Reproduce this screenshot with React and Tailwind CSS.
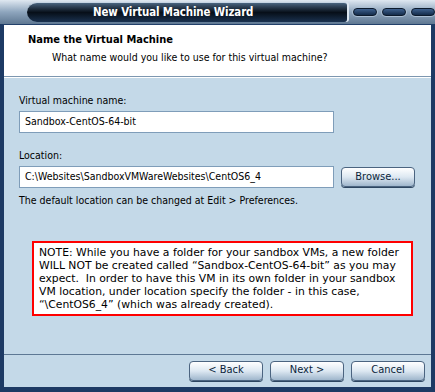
export default function App() {
  const ui = { fontFamily: '"DejaVu Sans Condensed", "DejaVu Sans", sans-serif' };
  const Pill = () => (
    <div className="w-[24px] h-[8px] rounded-full bg-gradient-to-b from-[#3f6290] to-[#142c4a] border border-[#0c1a2c] shadow-[0_0_0_1px_#a9bdd2]" />
  );
  const Btn = ({ children, w = "w-[74px]" }) => (
    <div className={`${w} h-[20px] rounded-[4px] border border-[#4b6480] bg-gradient-to-b from-[#ffffff] via-[#dde8f2] to-[#9fb6cc] flex items-center justify-center text-[11px] text-[#0b1f3a] shadow-[0_1px_0_#2c4560]`}>
      {children}
    </div>
  );
  return (
    <div className="w-[435px] h-[392px] bg-[#c4d9e8] flex flex-col overflow-hidden" style={ui}>
      {/* title bar */}
      <div className="h-[24px] relative flex items-center bg-gradient-to-b from-[#dfe8f1] via-[#8ea5bd] to-[#5f7892] shrink-0">
        <div className="ml-[27px] w-[320px] h-[20px] rounded-l-[10px] rounded-r-[3px] bg-gradient-to-b from-[#4a6580] via-[#070f19] to-[#1a3250] border-t border-[#c5d4e3] shadow-[2px_0_0_#dbe5ef] flex items-center pl-[66px]">
          <span className="text-white font-bold text-[11.4px] tracking-[-0.1px]">New Virtual Machine Wizard</span>
        </div>
        <div className="flex gap-[5px] ml-[6px]">
          <Pill /><Pill /><Pill />
        </div>
      </div>
      {/* body frame */}
      <div className="flex-1 flex flex-col border-l-[4px] border-r-[4px] border-b-[5px] border-[#1d3a64] border-t border-t-[#22406a]">
        <div className="h-[52px] bg-white border-b border-[#7d97b0] shrink-0 pl-[24px] pt-[7px]">
          <div className="font-bold text-[11px] text-black leading-[16px]">Name the Virtual Machine</div>
          <div className="text-[10.5px] text-black leading-[16px] ml-[24px] mt-[1px]">What name would you like to use for this virtual machine?</div>
        </div>
        <div className="flex-1 border-t border-white pl-[15px] pr-[14px] pt-[15px] flex flex-col text-[10.5px]">
          <div className="text-black leading-[14px]">Virtual machine name:</div>
          <div className="mt-[4px] w-[315px] h-[22px] bg-white border border-[#7f9db9] flex items-center pl-[5px] text-black">Sandbox-CentOS-64-bit</div>
          <div className="text-black leading-[14px] mt-[15px]">Location:</div>
          <div className="mt-[4px] flex items-center">
            <div className="w-[315px] h-[22px] bg-white border border-[#7f9db9] flex items-center pl-[5px] text-black">C:\Websites\SandboxVMWareWebsites\CentOS6_4</div>
            <div className="ml-[7px]"><Btn>Browse...</Btn></div>
          </div>
          <div className="text-black leading-[14px] mt-[5px]">The default location can be changed at Edit &gt; Preferences.</div>
          <div className="mt-[34px] ml-[13px] w-[381px] border-[2px] border-[#ff0000] bg-white px-[5px] py-[3px]">
            <div className="text-[10.8px] leading-[13px] text-black" style={{ fontFamily: '"DejaVu Sans", sans-serif' }}>
              NOTE: While you have a folder for your sandbox VMs, a new folder WILL NOT be created called “Sandbox-CentOS-64-bit” as you may expect.&nbsp; In order to have this VM in its own folder in your sandbox VM location, under location specify the folder - in this case, “\CentOS6_4” (which was already created).
            </div>
          </div>
          <div className="flex-1" />
        </div>
        <div className="h-[33px] border-t border-[#5d7894] shrink-0 flex items-center justify-end pr-[6px] gap-[7px] pb-[1px]">
          <Btn>&lt; Back</Btn>
          <Btn>Next &gt;</Btn>
          <Btn>Cancel</Btn>
        </div>
      </div>
    </div>
  );
}
